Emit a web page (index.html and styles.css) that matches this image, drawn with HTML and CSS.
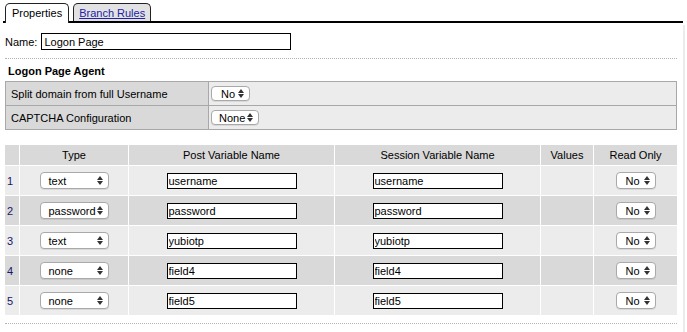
FILE: index.html
```html
<!DOCTYPE html>
<html lang="en">
<head>
  <meta charset="UTF-8">
  <title>Logon Page Properties</title>
  <link rel="stylesheet" href="styles.css">
</head>
<body>
  <div class="tabs">
    <div class="tab active">Properties</div>
    <div class="tab"><a href="#">Branch Rules</a></div>
  </div>

  <div class="panel">
    <div class="name-row">
      <label>Name:</label>
      <input type="text" class="name-input" value="Logon Page">
    </div>

    <div class="dots"></div>

    <h4>Logon Page Agent</h4>
    <table class="agent">
      <tr>
        <td class="lbl">Split domain from full Username</td>
        <td class="val"><span class="sel sm w39">No<svg width="6" height="9" viewBox="0 0 6 9"><path d="M0 4L3 0L6 4Z M0 5L3 9L6 5Z"/></svg></span></td>
      </tr>
      <tr>
        <td class="lbl">CAPTCHA Configuration</td>
        <td class="val"><span class="sel sm w48">None<svg width="6" height="9" viewBox="0 0 6 9"><path d="M0 4L3 0L6 4Z M0 5L3 9L6 5Z"/></svg></span></td>
      </tr>
    </table>

    <table class="fields">
      <tr>
        <th class="num"></th>
        <th class="c-type">Type</th>
        <th class="c-var">Post Variable Name</th>
        <th class="c-var">Session Variable Name</th>
        <th class="c-values">Values</th>
        <th class="c-ro">Read Only</th>
      </tr>
      <tr class="odd">
        <td class="num">1</td>
        <td><span class="sel w69">text<svg width="6" height="9" viewBox="0 0 6 9"><path d="M0 4L3 0L6 4Z M0 5L3 9L6 5Z"/></svg></span></td>
        <td><input type="text" class="var" value="username"></td>
        <td><input type="text" class="var" value="username"></td>
        <td></td>
        <td><span class="sel w40">No<svg width="6" height="9" viewBox="0 0 6 9"><path d="M0 4L3 0L6 4Z M0 5L3 9L6 5Z"/></svg></span></td>
      </tr>
      <tr class="even">
        <td class="num">2</td>
        <td><span class="sel w69">password<svg width="6" height="9" viewBox="0 0 6 9"><path d="M0 4L3 0L6 4Z M0 5L3 9L6 5Z"/></svg></span></td>
        <td><input type="text" class="var" value="password"></td>
        <td><input type="text" class="var" value="password"></td>
        <td></td>
        <td><span class="sel w40">No<svg width="6" height="9" viewBox="0 0 6 9"><path d="M0 4L3 0L6 4Z M0 5L3 9L6 5Z"/></svg></span></td>
      </tr>
      <tr class="odd">
        <td class="num">3</td>
        <td><span class="sel w69">text<svg width="6" height="9" viewBox="0 0 6 9"><path d="M0 4L3 0L6 4Z M0 5L3 9L6 5Z"/></svg></span></td>
        <td><input type="text" class="var" value="yubiotp"></td>
        <td><input type="text" class="var" value="yubiotp"></td>
        <td></td>
        <td><span class="sel w40">No<svg width="6" height="9" viewBox="0 0 6 9"><path d="M0 4L3 0L6 4Z M0 5L3 9L6 5Z"/></svg></span></td>
      </tr>
      <tr class="even">
        <td class="num">4</td>
        <td><span class="sel w69">none<svg width="6" height="9" viewBox="0 0 6 9"><path d="M0 4L3 0L6 4Z M0 5L3 9L6 5Z"/></svg></span></td>
        <td><input type="text" class="var" value="field4"></td>
        <td><input type="text" class="var" value="field4"></td>
        <td></td>
        <td><span class="sel w40">No<svg width="6" height="9" viewBox="0 0 6 9"><path d="M0 4L3 0L6 4Z M0 5L3 9L6 5Z"/></svg></span></td>
      </tr>
      <tr class="odd">
        <td class="num">5</td>
        <td><span class="sel w69">none<svg width="6" height="9" viewBox="0 0 6 9"><path d="M0 4L3 0L6 4Z M0 5L3 9L6 5Z"/></svg></span></td>
        <td><input type="text" class="var" value="field5"></td>
        <td><input type="text" class="var" value="field5"></td>
        <td></td>
        <td><span class="sel w40">No<svg width="6" height="9" viewBox="0 0 6 9"><path d="M0 4L3 0L6 4Z M0 5L3 9L6 5Z"/></svg></span></td>
      </tr>
    </table>

    <div class="dots bottom"></div>
  </div>
</body>
</html>
```

FILE: styles.css
```css
body {
  margin: 0;
  font-family: "Liberation Sans", Arial, sans-serif;
  font-size: 11px;
  color: #000;
  background: #fff;
}
.tabs {
  display: flex;
  gap: 4px;
  margin: 3px 4px 0 3px;
  padding-left: 2px;
  border-bottom: 2px solid #000;
  height: 18px;
}
.tab {
  height: 18px;
  box-sizing: border-box;
  padding: 3px 5px 0 5px;
  border: 1px solid #222;
  border-bottom: none;
  border-radius: 5px 5px 0 0;
  background: #e2e2e2;
  line-height: 13px;
}
.tab.active {
  background: #fff;
  height: 20px;
  padding: 3px 6px 0 6px;
  position: relative;
  z-index: 1;
}
.tab a {
  color: #2323a8;
  text-decoration: underline;
}
.panel {
  width: 685px;
  box-sizing: border-box;
  padding: 0 6px 8px 5px;
  border-right: 2px solid #ececec;
  margin-top: 2px;
}
.name-row {
  display: flex;
  align-items: center;
  gap: 4px;
  padding-top: 8px;
}
.name-input {
  width: 250px;
  height: 17px;
  box-sizing: border-box;
  border: 1px solid #000;
  padding: 0 2px;
  font: inherit;
  margin: 0;
}
.dots {
  border-top: 1px dotted #b4b4b4;
  margin-top: 8px;
}
.dots.bottom {
  margin-top: 8px;
}
h4 {
  margin: 5px 0 0 3px;
  font-size: 11px;
  font-weight: bold;
  line-height: 14px;
}
.agent {
  width: 100%;
  border-collapse: collapse;
  margin-top: 3px;
  border: 1px solid #a8a8a8;
}
.agent td {
  border: 1px solid #a8a8a8;
  height: 23px;
  padding: 0;
}
.agent .lbl {
  width: 197px;
  padding-left: 5px;
  background: #d9d9d9;
}
.agent .val {
  padding-left: 2px;
  background: #ececec;
}
.fields {
  width: 100%;
  border-collapse: collapse;
  margin-top: 15px;
}
.fields th,
.fields td {
  border: 1px solid #fff;
  padding: 0;
  text-align: center;
  font-weight: normal;
}
.fields th {
  background: #d9d9d9;
  height: 20px;
}
.fields td {
  height: 29px;
}
.fields tr.odd td {
  background: #ececec;
}
.fields tr.even td {
  background: #d9d9d9;
}
.fields tr:first-child th {
  border-top: none;
}
.fields th:first-child,
.fields td:first-child {
  border-left: none;
}
.fields th:last-child,
.fields td:last-child {
  border-right: none;
}
.fields tr:last-child td {
  border-bottom: none;
}
.fields .num {
  width: 12px;
  text-align: left;
  padding-left: 2px;
  color: #16166a;
}
.c-type { width: 108px; }
.c-var { width: 205px; }
.c-values { width: 52px; }
.var {
  width: 130px;
  height: 16px;
  box-sizing: border-box;
  border: 1px solid #000;
  padding: 0 1px;
  margin: 0;
  font: inherit;
  vertical-align: middle;
}
.sel {
  display: inline-flex;
  align-items: center;
  justify-content: space-between;
  box-sizing: border-box;
  height: 17px;
  padding: 0 5px 0 8px;
  border: 1px solid #a9a9a9;
  border-radius: 4px;
  background: #fff;
  box-shadow: 0 1px 0 rgba(0, 0, 0, 0.08);
  vertical-align: middle;
  text-align: left;
}
.sel.sm {
  height: 15px;
}
.sel svg {
  fill: #333;
  flex: none;
}
.w39 { width: 39px; padding-left: 9px; }
.w48 { width: 48px; padding-left: 7px; }
.w69 { width: 69px; }
.w40 { width: 40px; padding-left: 9px; }
```
